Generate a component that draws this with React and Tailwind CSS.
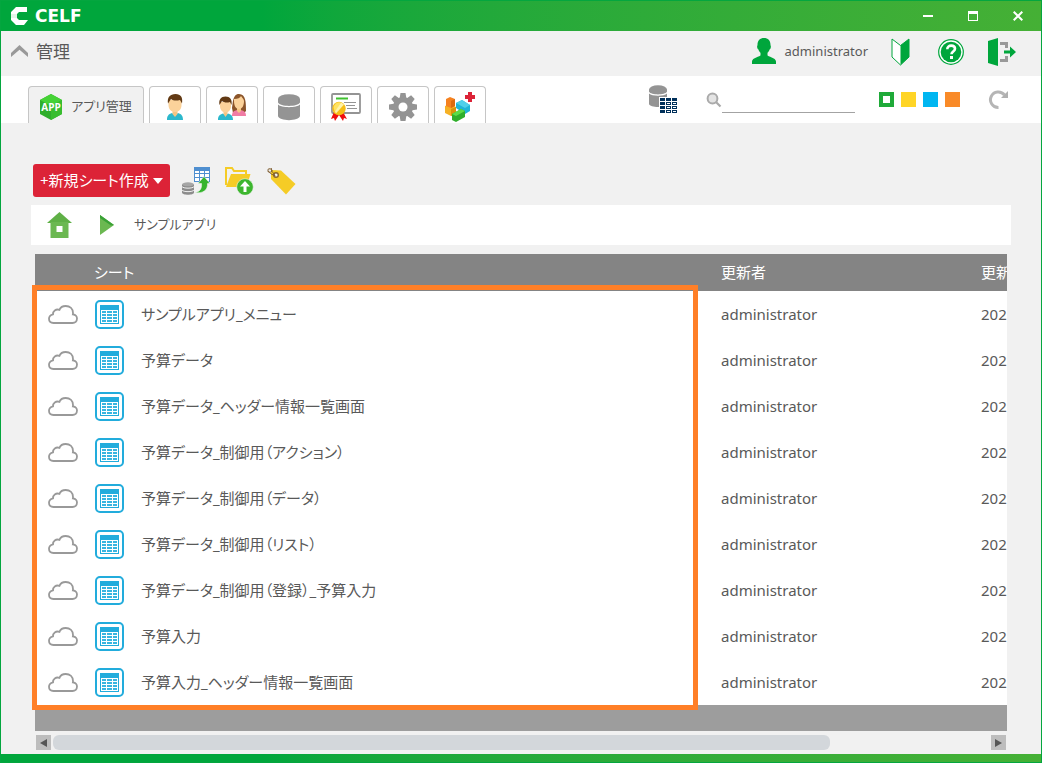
import cn from "clsx";
import { useState } from "react";

const SHEETS = [
  "サンプルアプリ_メニュー",
  "予算データ",
  "予算データ_ヘッダー情報一覧画面",
  "予算データ_制御用（アクション）",
  "予算データ_制御用（データ）",
  "予算データ_制御用（リスト）",
  "予算データ_制御用（登録）_予算入力",
  "予算入力",
  "予算入力_ヘッダー情報一覧画面",
];

const TABS = [
  { id: "user", label: "ユーザー", icon: <UserIcon /> },
  { id: "group", label: "グループ", icon: <GroupIcon /> },
  { id: "database", label: "データベース", icon: <DatabaseIcon /> },
  { id: "license", label: "ライセンス", icon: <LicenseIcon /> },
  { id: "settings", label: "設定", icon: <GearIcon /> },
  { id: "addon", label: "アドオン", icon: <AddonIcon /> },
];

const COLORS = [
  { id: "green", className: "bg-[#1faa39]" },
  { id: "yellow", className: "bg-[#ffd526]" },
  { id: "blue", className: "bg-[#00b6f1]" },
  { id: "orange", className: "bg-[#f98a28]" },
];

export default function App() {
  return (
    <div className="flex flex-col border-x border-[#04a63f] bg-[#f1f1f1] text-[15px] text-[#595959] font-['Noto_Sans','Noto_Sans_CJK_JP',sans-serif] [font-feature-settings:'palt']">
      <TitleBar />
      <Header />
      <TabBar />
      <main className="px-[30px] pt-[41px] pb-1">
        <Toolbar />
        <Breadcrumb />
        <SheetTable />
        <ScrollBar />
      </main>
      <footer className="h-[9px] border-b border-[#04a63f] bg-linear-to-r from-[#00a63c] from-25% to-[#45b035]" />
    </div>
  );
}

function TitleBar() {
  return (
    <div className="flex h-[31px] items-center border-t border-[#04a63f] bg-linear-to-r from-[#00a63c] from-25% to-[#45b035] pr-[18px] pl-[10px] text-white">
      <svg width="17" height="18" viewBox="0 0 17 18" aria-hidden="true">
        <path d="M5 0h11v5H8L6 7H0V5z" fill="#fff" />
        <path d="M0 7h6v4H0z" fill="#e3f5e8" />
        <path d="M0 11h6l2 2h9l-4 5H5l-5-5z" fill="#fff" />
      </svg>
      <span className="ml-[7px] text-[17px] leading-none font-bold font-['DejaVu_Sans',sans-serif]">
        CELF
      </span>
      <div className="ml-auto flex items-center gap-[35px]">
        <button type="button" aria-label="最小化">
          <svg width="10" height="10" viewBox="0 0 10 10">
            <path d="M0 4h10v2H0z" fill="#fff" />
          </svg>
        </button>
        <button type="button" aria-label="最大化">
          <svg width="10" height="10" viewBox="0 0 10 10">
            <path d="M0 0h10v10H0zM1 3v6h8V3z" fill="#fff" fillRule="evenodd" />
          </svg>
        </button>
        <button type="button" aria-label="閉じる">
          <svg width="10" height="10" viewBox="0 0 10 10">
            <path d="M.7.7l8.6 8.6M9.3.7L.7 9.3" stroke="#fff" strokeWidth="2" />
          </svg>
        </button>
      </div>
    </div>
  );
}

function Header() {
  return (
    <header className="flex h-[45px] items-center pr-[25px] pb-1 pl-[10px]">
      <button type="button" aria-label="折りたたむ">
        <svg width="17" height="14" viewBox="0 0 17 14">
          <path d="M0 8L8.500 0 17 8v4L8.500 4.800 0 12z" fill="#999" />
        </svg>
      </button>
      <h1 className="ml-2 text-[17px]">管理</h1>
      <div className="ml-auto flex items-center">
        <svg width="24" height="27" viewBox="0 0 24 27" aria-hidden="true">
          <path
            d="M12 0c4 0 6.500 2.700 6.500 6.800 0 1 .6 1 .3 2.600-.3 1.500-1 1.500-1.300 2.400-.5 1.400-1.200 2.300-2 3v2.400c0 1.500 8.500 2.200 8.500 6.300V26H0v-2.500c0-4.100 8.500-4.800 8.500-6.300v-2.400c-.8-.7-1.500-1.600-2-3-.3-.9-1-.9-1.300-2.400-.3-1.600.3-1.600.3-2.600C5.500 2.700 8 0 12 0z"
            fill="#00a63c"
          />
        </svg>
        <span className="ml-[9px] text-[13px]">administrator</span>
        <button type="button" aria-label="初心者ガイド" className="ml-[23px]">
          <svg width="19" height="28" viewBox="0 0 19 28">
            <path
              d="M1 1l8.500 6.500L18 1v18l-8.500 8L1 19z"
              fill="#fff"
              stroke="#00a63c"
              strokeWidth="1"
            />
            <path d="M9.500 7.500L18 1v18l-8.500 8z" fill="#00a63c" />
          </svg>
        </button>
        <button type="button" aria-label="ヘルプ" className="ml-7">
          <svg width="26" height="26" viewBox="0 0 26 26">
            <circle cx="13" cy="13" r="12.300" fill="#fff" stroke="#00a63c" strokeWidth="1.200" />
            <circle cx="13" cy="13" r="10.300" fill="#00a63c" />
            <path
              d="M9.300 10.300c0-2.300 1.700-3.700 3.900-3.700 2.300 0 3.800 1.300 3.800 3.200 0 2.700-3.500 2.800-3.500 5.400"
              fill="none"
              stroke="#fff"
              strokeWidth="2.600"
            />
            <path d="M12 17h3v3h-3z" fill="#fff" />
          </svg>
        </button>
        <button type="button" aria-label="ログアウト" className="ml-6">
          <svg width="28" height="28" viewBox="0 0 28 28">
            <path d="M10 0v28L0 25V3z" fill="#00a63c" />
            <path
              d="M12 4h8v6h-3V7h-5zM12 24h8v-6h-3v3h-5z"
              fill="#999"
            />
            <path d="M16 12.500h6V8.500l6 5.500-6 5.500v-4h-6z" fill="#00a63c" />
          </svg>
        </button>
      </div>
    </header>
  );
}

function TabBar() {
  return (
    <div className="flex h-[47px] items-end bg-white pr-[31px] pl-[27px]">
      <div role="tablist" className="flex gap-[5px]">
        <TabItem active label="アプリ管理">
          <AppIcon />
          <span className="ml-[9px] text-[13px]">アプリ管理</span>
        </TabItem>
        {TABS.map((tab) => (
          <TabItem key={tab.id} label={tab.label}>
            {tab.icon}
          </TabItem>
        ))}
      </div>
      <div className="ml-auto flex h-full items-center">
        <button type="button" aria-label="データ一覧">
          <DataTableIcon />
        </button>
        <label htmlFor="search" className="ml-7">
          <svg width="16" height="16" viewBox="0 0 16 16" aria-label="検索">
            <circle cx="6.500" cy="6.500" r="4.900" fill="#e4e4e4" stroke="#aaa" strokeWidth="2" />
            <path d="M10 10l4.500 4.500" stroke="#aaa" strokeWidth="2.200" />
          </svg>
        </label>
        <input
          id="search"
          type="text"
          className="h-[27px] w-[133px] border-b border-[#a3a3a3] bg-transparent text-[13px] outline-none"
        />
        <ColorPicker />
        <button type="button" aria-label="更新" className="ml-7">
          <svg width="22" height="20" viewBox="0 0 22 20">
            <path
              d="M10.500 17.500A7.800 7.800 0 1 1 16.500 5"
              fill="none"
              stroke="#b5b5b5"
              strokeWidth="3"
            />
            <path d="M20 1v7h-7z" fill="#b0b0b0" />
          </svg>
        </button>
      </div>
    </div>
  );
}

function TabItem({ active, label, children }) {
  return (
    <button
      type="button"
      role="tab"
      aria-selected={Boolean(active)}
      aria-label={label}
      className={cn(
        "flex h-[37px] items-center justify-center rounded-t border border-b-0 border-[#c6c6c6] pt-1",
        active ? "w-[116px] bg-[#f1f1f1]" : "w-[52px] bg-white"
      )}
    >
      {children}
    </button>
  );
}

function ColorPicker() {
  const [color, setColor] = useState("green");
  return (
    <div role="radiogroup" aria-label="テーマカラー" className="ml-6 flex gap-[7px]">
      {COLORS.map((item) => (
        <input
          key={item.id}
          type="radio"
          name="color"
          aria-label={item.id}
          checked={color === item.id}
          onChange={() => setColor(item.id)}
          className={cn(
            "flex size-[15px] appearance-none items-center justify-center checked:before:size-[7px] checked:before:bg-white",
            item.className
          )}
        />
      ))}
    </div>
  );
}

function Toolbar() {
  return (
    <div className="flex items-center pl-0.5">
      <button
        type="button"
        className="flex h-[33px] w-[137px] items-center justify-between rounded-[3px] bg-[#dc2337] px-[7px] whitespace-nowrap text-white"
      >
        <span>+新規シート作成</span>
        <svg width="10" height="6" viewBox="0 0 10 6" aria-hidden="true">
          <path d="M0 0h10L5 6z" fill="#fff" />
        </svg>
      </button>
      <button type="button" aria-label="データ取込" className="ml-3">
        <svg width="28" height="28" viewBox="0 0 28 28">
          <path d="M12 0h16v15H12z" fill="#4f8fd0" />
          <path
            d="M13 4h4v2h-4zM18 4h4v2h-4zM23 4h4v2h-4zM13 7h4v3h-4zM18 7h4v3h-4zM23 7h4v3h-4zM13 11h4v3h-4zM18 11h4v3h-4zM23 11h4v3h-4z"
            fill="#fff"
          />
          <path d="M0 17.500v8C0 28.500 12 28.500 12 25.500v-8z" fill="#8c8c8c" />
          <ellipse cx="6" cy="17.300" rx="6" ry="2" fill="#a6a6a6" />
          <path d="M0 19.500c1 2.200 11 2.200 12 0M0 23c1 2.200 11 2.200 12 0" fill="none" stroke="#f1f1f1" />
          <path
            d="M22 9.500l6 7h-2.500C26 23 21 27 12.500 25.500c5-.5 7.500-3.500 7-9H16z"
            fill="#35b42d"
            stroke="#f1f1f1"
            strokeWidth=".6"
          />
        </svg>
      </button>
      <button type="button" aria-label="フォルダーへ移動" className="ml-[15px]">
        <svg width="29" height="28" viewBox="0 0 29 28">
          <path d="M0 1h7l2 3h12v4" fill="none" stroke="#f5cc26" strokeWidth="2" />
          <path d="M0 0h2v18H0z" fill="#f5cc26" />
          <path d="M6 7h19.500l-4 13H1z" fill="#f5cc26" />
          <circle cx="20" cy="20" r="8.300" fill="#3db62f" stroke="#f1f1f1" strokeWidth=".6" />
          <path d="M20 14l5 5.500h-3.500V25h-3v-5.500H15z" fill="#fff" />
        </svg>
      </button>
      <button type="button" aria-label="タグ" className="ml-[13px]">
        <svg width="29" height="28" viewBox="0 0 29 28">
          <path d="M4 3l10 .5L28.500 17 19 27.500 4 12z" fill="#f5cc26" />
          <circle cx="9" cy="8" r="2.300" fill="#f1f1f1" stroke="#8a672d" strokeWidth="1.400" />
          <path
            d="M8.500 9C3 7 .5 4 1 2.500S6 2 5 4 1 5 .5 4M8 7.500C4.500 5 4 3 4.500 1"
            fill="none"
            stroke="#7c5a2b"
          />
        </svg>
      </button>
    </div>
  );
}

function Breadcrumb() {
  return (
    <nav className="mt-2 flex h-10 items-center bg-white pl-4">
      <a href="#home" aria-label="ホーム">
        <svg width="25" height="26" viewBox="0 0 25 26">
          <path d="M12.500 0L25 11H0z" fill="#5fb046" />
          <path d="M3.500 10h18v16h-18z" fill="#6bb851" />
          <path d="M9.500 14h6v6h-6z" fill="#fff" />
        </svg>
      </a>
      <svg className="ml-7" width="14" height="20" viewBox="0 0 14 20" aria-hidden="true">
        <path d="M0 0l14 10L0 20z" fill="#6bb851" />
        <path d="M0 0l14 10-3 .5L0 3z" fill="#39a136" />
      </svg>
      <span className="ml-5 text-[13px]">サンプルアプリ</span>
    </nav>
  );
}

function SheetTable() {
  return (
    <div className="relative mx-1 mt-[9px]">
      <div className="overflow-hidden">
        <table className="w-full min-w-[1175px] table-fixed text-left whitespace-nowrap">
          <colgroup>
            <col className="w-[686px]" />
            <col className="w-[260px]" />
            <col />
          </colgroup>
          <thead className="bg-[#848484] text-white">
            <tr className="h-[37px]">
              <th className="pl-[59px] font-normal">シート</th>
              <th className="font-normal">更新者</th>
              <th className="font-normal">更新</th>
            </tr>
          </thead>
          <tbody className="bg-white">
            {SHEETS.map((name) => (
              <SheetRow key={name} name={name} />
            ))}
          </tbody>
        </table>
      </div>
      <div className="h-[26px] bg-[#9d9d9d]" />
      {/* highlight around the sheet column */}
      <div className="pointer-events-none absolute top-[31px] bottom-[21px] -left-[3px] w-[666px] border-5 border-[#ff7f27]" />
    </div>
  );
}

function SheetRow({ name }) {
  return (
    <tr className="h-[46px]">
      <td>
        <div className="flex items-center gap-[17px] pl-[13px]">
          <CloudIcon />
          <SheetIcon />
          <span>{name}</span>
        </div>
      </td>
      <td>administrator</td>
      <td>202</td>
    </tr>
  );
}

function ScrollBar() {
  return (
    <div className="mx-[5px] mt-1 flex h-[15px] items-center gap-0.5">
      <button
        type="button"
        aria-label="左へ"
        className="flex size-[15px] shrink-0 items-center justify-center bg-[#bdbdbd]"
      >
        <svg width="7" height="8" viewBox="0 0 7 8">
          <path d="M7 0v8L0 4z" fill="#555" />
        </svg>
      </button>
      <div className="h-full flex-1">
        <div className="h-full w-[83%] rounded-md bg-[#d3d7db]" />
      </div>
      <button
        type="button"
        aria-label="右へ"
        className="flex size-[15px] shrink-0 items-center justify-center bg-[#bdbdbd]"
      >
        <svg width="7" height="8" viewBox="0 0 7 8">
          <path d="M0 0v8l7-4z" fill="#555" />
        </svg>
      </button>
    </div>
  );
}

function CloudIcon() {
  return (
    <svg width="30" height="20" viewBox="0 0 30 20" aria-hidden="true">
      <path
        d="M5.500 19C2.800 19 1 17.200 1 14.800c0-2.200 1.500-3.900 4-4.500-.2-3.300 2.800-5.600 6.500-4.500C12.500 3.200 14.700 2 17.700 2c4.300 0 7.300 2.900 7.300 7 0 .5 0 1-.1 1.400 2.500.4 4.100 2.100 4.100 4.200 0 2.600-1.900 4.400-4.500 4.400z"
        fill="#fff"
        stroke="#999"
        strokeWidth="1.800"
      />
    </svg>
  );
}

function SheetIcon() {
  return (
    <svg width="29" height="29" viewBox="0 0 29 29" aria-hidden="true">
      <rect x="1" y="1" width="27" height="27" rx="4" fill="#fff" stroke="#22acdc" strokeWidth="2" />
      <path d="M5 5h19v19H5z" fill="#22acdc" />
      <path d="M6 10h17v13H6z" fill="#fff" />
      <path
        d="M7 11h4v2H7zM12 11h5v2h-5zM18 11h4v2h-4zM7 14h4v2H7zM12 14h5v2h-5zM18 14h4v2h-4zM7 17h4v2H7zM12 17h5v2h-5zM18 17h4v2h-4zM7 20h4v2H7zM12 20h5v2h-5zM18 20h4v2h-4z"
        fill="#38b5e0"
      />
    </svg>
  );
}

function AppIcon() {
  return (
    <svg width="22" height="26" viewBox="0 0 22 26" aria-hidden="true">
      <path d="M11 0l11 6v14l-11 6L0 20V6z" fill="#2fae2b" />
      <path d="M11 0l11 6-11 6L0 6z" fill="#45d236" />
      <path d="M11 12l11-6v14l-11 6z" fill="#38bd2e" />
      <text
        x="11"
        y="17"
        textAnchor="middle"
        fontSize="10"
        fontWeight="700"
        fill="#fff"
        className="font-['Open_Sans',sans-serif]"
      >
        APP
      </text>
    </svg>
  );
}

function UserIcon() {
  return (
    <svg width="18" height="27" viewBox="0 0 18 27" aria-hidden="true">
      <path d="M1 26c0-4 1.500-6 5-7l3 2 3-2c3.500 1 5 3 5 7z" fill="#2cb8cc" />
      <path d="M6.500 15h5v5L9 23l-2.500-3z" fill="#f5c583" />
      <path d="M2.500 6h13v5c0 4.500-3 7-6.500 7s-6.500-2.500-6.500-7z" fill="#fbd29a" />
      <path d="M2 9.500C1 3.500 4 0 9.500 0 15 0 17 3.500 16 9.500L14 6c-4 1.200-7 .5-9-1z" fill="#623a14" />
    </svg>
  );
}

function GroupIcon() {
  return (
    <svg width="29" height="27" viewBox="0 0 29 27" aria-hidden="true">
      <path d="M14 14c1-3 0-14 7-14s7 9 7 17l-2 2H15z" fill="#8b552a" />
      <path d="M14 22c0-4 1.500-5 5-6h4c3.500 1 5 2.500 5 6z" fill="#f07ca4" />
      <path d="M19 12h4v5l-2 2-2-2z" fill="#f5c583" />
      <path d="M16 5c4 0 6-1 7-3 1 2 3 3 3 5 0 5-2 8-5 8s-5-3-5-8z" fill="#fbd29a" />
      <path d="M0 26c0-4 1.500-5.500 5-6.500l2.500 2 2.500-2c3.500 1 5 2.500 5 6.500z" fill="#2cb8cc" />
      <path d="M5.500 16h4v4l-2 3-2-3z" fill="#f5c583" />
      <path d="M2 8h11v4c0 4-2.500 6.500-5.500 6.500S2 16 2 12z" fill="#fbd29a" />
      <path d="M1.500 11C.5 5.500 3 2.500 7.500 2.500S14.500 5.500 13.500 11L12 8C8.500 9 6 8.500 4 7z" fill="#623a14" />
    </svg>
  );
}

function DatabaseIcon() {
  return (
    <svg width="22" height="27" viewBox="0 0 22 27" aria-hidden="true">
      <ellipse cx="11" cy="5" rx="11" ry="4.800" fill="#949494" />
      <path d="M0 5v3.500c2 4.500 20 4.500 22 0V5z" fill="#949494" />
      <path d="M0 10.500c3 3.500 19 3.500 22 0V22c-1 5.500-21 5.500-22 0z" fill="#949494" />
    </svg>
  );
}

function LicenseIcon() {
  return (
    <svg width="30" height="28" viewBox="0 0 30 28" aria-hidden="true">
      <rect x="1" y="1" width="28" height="19" rx="1" fill="#fff" stroke="#949494" strokeWidth="1.800" />
      <path d="M5 4.500h12v2H5z" fill="#3fc22f" />
      <path d="M13 9.500h12M15 12.500h9M16 15.500h10" stroke="#949494" strokeWidth="1.200" />
      <path d="M3 19l-3 7 3-1 1 3 4-6 4 6 1-3 3 1-4-7z" fill="#ee1010" />
      <circle cx="8" cy="15.500" r="6.700" fill="#f6bd16" />
      <path d="M2.500 14A6 6 0 0 1 10 9.500L4 20z" fill="#ffe262" />
      <path d="M10 9.500l3 2-8 9-1-2z" fill="#fff3a8" />
    </svg>
  );
}

function GearIcon() {
  return (
    <svg width="28" height="28" viewBox="0 0 28 28" aria-hidden="true">
      <g fill="#949494">
        <circle cx="14" cy="14" r="10" />
        <path d="M11.500 0h5l1 6h-7zM11.500 28h5l1-6h-7zM0 11.500v5l6 1v-7zM28 11.500v5l-6 1v-7z" />
        <path d="M2.300 5.900l3.600-3.600 4.900 3.500-5 5zM25.700 5.900l-3.600-3.600-4.900 3.500 5 5zM2.300 22.100l3.600 3.600 4.900-3.500-5-5zM25.700 22.100l-3.600 3.600-4.900-3.500 5-5z" />
      </g>
      <circle cx="14" cy="14" r="4.500" fill="#fff" />
    </svg>
  );
}

function AddonIcon() {
  return (
    <svg width="30" height="30" viewBox="0 0 30 30" aria-hidden="true">
      <path d="M0 14l5-2 6 3v7l-5 2-6-3z" fill="#f6b125" />
      <path d="M6 17l5-2v7l-5 2z" fill="#d9930c" />
      <path d="M1 7l4-2 5 2v7l-4 2-5-2z" fill="#f58220" />
      <path d="M6 9l4-2v7l-4 2z" fill="#dd6a10" />
      <path d="M11 11l6-3 8 5v6l-5 3-9-6z" fill="#1fb5d8" />
      <path d="M11 11l6-3 8 5-5 3z" fill="#4fd0ea" />
      <path d="M7 22l9-5 4 2v6l-9 5-4-2z" fill="#2fae2b" />
      <path d="M7 22l9-5 4 2-9 5z" fill="#5bdc48" />
      <path d="M23 0h4v3h3v4h-3v3h-4V7h-3V3h3z" fill="#dc2337" />
    </svg>
  );
}

function DataTableIcon() {
  return (
    <svg width="29" height="29" viewBox="0 0 29 29" aria-hidden="true">
      <ellipse cx="9" cy="4.500" rx="9" ry="4.300" fill="#949494" />
      <path d="M0 4.500v2.300c2 3.500 16 3.500 18 0V4.500z" fill="#949494" />
      <path d="M0 8.500c3 3 15 3 18 0V19c-1 4-17 4-18 0z" fill="#949494" />
      <path d="M10 12h19v17H10z" fill="#fff" />
      <path
        d="M11 13h5v3h-5zM17 13h5v3h-5zM23 13h5v3h-5zM11 17h5v3h-5zM17 17h5v3h-5zM23 17h5v3h-5zM11 21h5v3h-5zM17 21h5v3h-5zM23 21h5v3h-5zM11 25h5v3h-5zM17 25h5v3h-5zM23 25h5v3h-5z"
        fill="#00305a"
      />
      <path
        d="M18 18h3v1h-3zM24 18h3v1h-3zM18 22h3v1h-3zM24 22h3v1h-3zM18 26h3v1h-3zM24 26h3v1h-3z"
        fill="#fff"
      />
    </svg>
  );
}
